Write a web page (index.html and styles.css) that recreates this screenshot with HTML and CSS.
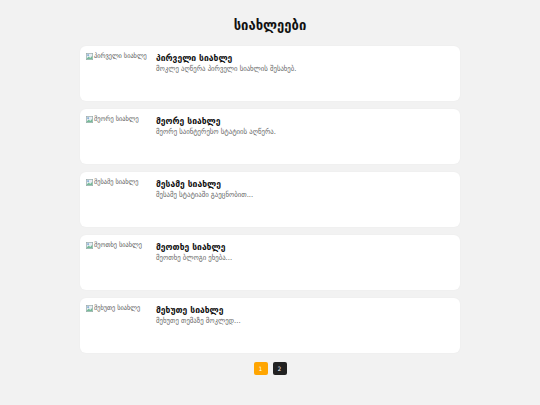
FILE: index.html
```html
<!DOCTYPE html>
<html lang="ka">
<head>
<meta charset="utf-8">
<title>სიახლეები</title>
<link rel="stylesheet" href="styles.css">
</head>
<body>
<h1 class="page-title">სიახლეები</h1>
<div class="news-list">
  <div class="card">
    <div class="thumb"><svg class="broken" viewBox="0 0 10 10" width="7" height="7"><rect x="0.5" y="0.5" width="9" height="9" fill="#e8eef4" stroke="#9aa"/><path d="M1 8 L4 5 L6 7 L9 4 L9 9 L1 9Z" fill="#7b9"/><circle cx="3" cy="3" r="1.2" fill="#69c"/></svg><span>პირველი სიახლე</span></div>
    <div class="body"><div class="title">პირველი სიახლე</div><div class="desc">მოკლე აღწერა პირველი სიახლის შესახებ.</div></div>
  </div>
  <div class="card">
    <div class="thumb"><svg class="broken" viewBox="0 0 10 10" width="7" height="7"><rect x="0.5" y="0.5" width="9" height="9" fill="#e8eef4" stroke="#9aa"/><path d="M1 8 L4 5 L6 7 L9 4 L9 9 L1 9Z" fill="#7b9"/><circle cx="3" cy="3" r="1.2" fill="#69c"/></svg><span>მეორე სიახლე</span></div>
    <div class="body"><div class="title">მეორე სიახლე</div><div class="desc">მეორე საინტერესო სტატიის აღწერა.</div></div>
  </div>
  <div class="card">
    <div class="thumb"><svg class="broken" viewBox="0 0 10 10" width="7" height="7"><rect x="0.5" y="0.5" width="9" height="9" fill="#e8eef4" stroke="#9aa"/><path d="M1 8 L4 5 L6 7 L9 4 L9 9 L1 9Z" fill="#7b9"/><circle cx="3" cy="3" r="1.2" fill="#69c"/></svg><span>მესამე სიახლე</span></div>
    <div class="body"><div class="title">მესამე სიახლე</div><div class="desc">მესამე სტატიაში გაეცნობით...</div></div>
  </div>
  <div class="card">
    <div class="thumb"><svg class="broken" viewBox="0 0 10 10" width="7" height="7"><rect x="0.5" y="0.5" width="9" height="9" fill="#e8eef4" stroke="#9aa"/><path d="M1 8 L4 5 L6 7 L9 4 L9 9 L1 9Z" fill="#7b9"/><circle cx="3" cy="3" r="1.2" fill="#69c"/></svg><span>მეოთხე სიახლე</span></div>
    <div class="body"><div class="title">მეოთხე სიახლე</div><div class="desc">მეოთხე ბლოგი ეხება...</div></div>
  </div>
  <div class="card">
    <div class="thumb"><svg class="broken" viewBox="0 0 10 10" width="7" height="7"><rect x="0.5" y="0.5" width="9" height="9" fill="#e8eef4" stroke="#9aa"/><path d="M1 8 L4 5 L6 7 L9 4 L9 9 L1 9Z" fill="#7b9"/><circle cx="3" cy="3" r="1.2" fill="#69c"/></svg><span>მეხუთე სიახლე</span></div>
    <div class="body"><div class="title">მეხუთე სიახლე</div><div class="desc">მეხუთე თემაზე მოკლედ...</div></div>
  </div>
</div>
<div class="pager">
  <span class="page active">1</span>
  <span class="page">2</span>
</div>
</body>
</html>
```

FILE: styles.css
```css
html, body {
  margin: 0;
  padding: 0;
  background: #f2f2f2;
  font-family: "DejaVu Sans Condensed", "DejaVu Sans", sans-serif;
  color: #222;
}
.page-title {
  margin: 0;
  padding-top: 15px;
  height: 31px;
  font-size: 14.5px;
  line-height: 20px;
  font-weight: bold;
  text-align: center;
  color: #111;
}
.news-list {
  width: 380px;
  margin: 0 auto;
  display: flex;
  flex-direction: column;
  gap: 8px;
}
.card {
  background: #fff;
  border-radius: 6px;
  height: 55px;
  box-sizing: border-box;
  padding: 5px 6px;
  display: flex;
  gap: 6px;
  box-shadow: 0 0 2px rgba(0,0,0,0.04);
}
.thumb {
  width: 64px;
  flex: none;
  display: flex;
  align-items: flex-start;
  gap: 1px;
  font-size: 7px;
  line-height: 10px;
  color: #555;
  white-space: nowrap;
  overflow: hidden;
}
.broken {
  flex: none;
  margin-top: 2px;
}
.body {
  display: flex;
  flex-direction: column;
}
.title {
  font-size: 9.5px;
  line-height: 13px;
  font-weight: bold;
  color: #111;
}
.desc {
  font-size: 7.5px;
  line-height: 9px;
  color: #666;
}
.pager {
  display: flex;
  justify-content: center;
  gap: 5px;
  margin-top: 9px;
}
.page {
  width: 14px;
  height: 13px;
  border-radius: 2px;
  background: #222;
  color: #fff;
  font-size: 6px;
  line-height: 13px;
  text-align: center;
}
.page.active {
  background: #ffa500;
}
```
